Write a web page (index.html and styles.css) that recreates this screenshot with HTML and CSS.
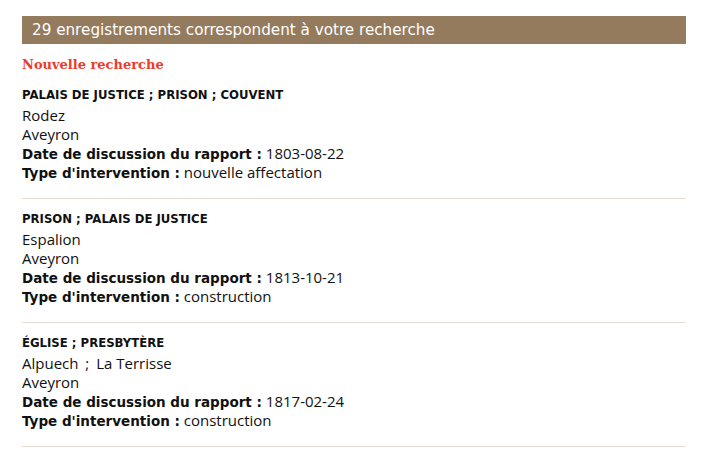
FILE: index.html
```html
<!DOCTYPE html>
<html lang="fr">
<head>
<meta charset="utf-8">
<link rel="stylesheet" href="styles.css">
</head>
<body>
<div class="page">
  <div class="bar">29 enregistrements correspondent à votre recherche</div>
  <a class="new" href="#">Nouvelle recherche</a>
  <div class="record">
    <div class="title">PALAIS DE JUSTICE ; PRISON ; COUVENT</div>
    <div class="line">Rodez</div>
    <div class="line">Aveyron</div>
    <div class="line"><b>Date de discussion du rapport :</b> 1803-08-22</div>
    <div class="line"><b>Type d'intervention :</b> nouvelle affectation</div>
  </div>
  <div class="record">
    <div class="title">PRISON ; PALAIS DE JUSTICE</div>
    <div class="line">Espalion</div>
    <div class="line">Aveyron</div>
    <div class="line"><b>Date de discussion du rapport :</b> 1813-10-21</div>
    <div class="line"><b>Type d'intervention :</b> construction</div>
  </div>
  <div class="record">
    <div class="title">ÉGLISE ; PRESBYTÈRE</div>
    <div class="line">Alpuech <span class="sep">;</span> La Terrisse</div>
    <div class="line">Aveyron</div>
    <div class="line"><b>Date de discussion du rapport :</b> 1817-02-24</div>
    <div class="line"><b>Type d'intervention :</b> construction</div>
  </div>
</div>
</body>
</html>
```

FILE: styles.css
```css
html, body {
  margin: 0;
  padding: 0;
  background: #fff;
}
body {
  font-family: "DejaVu Sans", sans-serif;
  color: #111;
}
.page {
  width: 664px;
  padding: 16px 0 0 22px;
}
.bar {
  background: #957b5d;
  color: #fff;
  font-size: 15.2px;
  line-height: 28px;
  height: 28px;
  padding-left: 10px;
}
.new {
  display: block;
  margin-top: 13px;
  font-family: "DejaVu Serif", serif;
  font-weight: bold;
  font-size: 13px;
  line-height: 16px;
  color: #ee3b28;
  text-decoration: none;
}
.record {
  padding: 14px 0 16px;
  border-bottom: 1px solid #e6ddd4;
}
.record + .record {
  padding-top: 12px;
}
.title {
  font-size: 11.7px;
  font-weight: bold;
  line-height: 16px;
  margin-bottom: 3px;
}
.line {
  font-family: "Open Sans", sans-serif;
  font-size: 15px;
  line-height: 19px;
  height: 19px;
}
.line b {
  font-family: "DejaVu Sans", sans-serif;
  font-weight: bold;
  font-size: 13.5px;
  line-height: 1;
}
.sep {
  margin: 0 3px;
}
```
